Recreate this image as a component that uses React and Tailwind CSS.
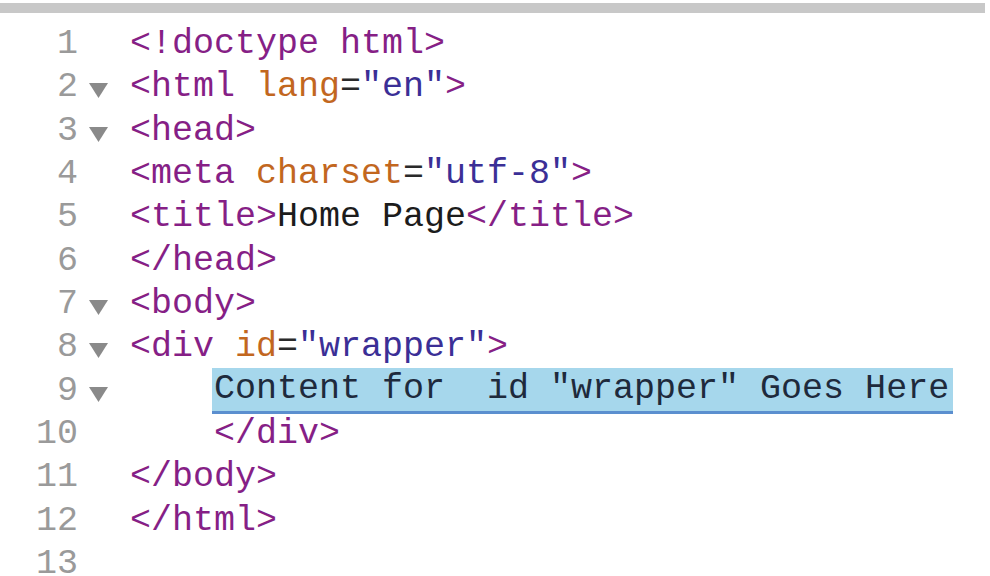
import React from 'react';

const tag = 'text-[#861f86]';
const attr = 'text-[#c2671f]';
const str = 'text-[#3b2f96]';
const eq = 'text-[#2a2a2a]';

const lines = [
  { fold: false, code: <><span className={tag}>&lt;!doctype html&gt;</span></> },
  {
    fold: true,
    code: (
      <>
        <span className={tag}>&lt;html </span>
        <span className={attr}>lang</span>
        <span className={eq}>=</span>
        <span className={str}>"en"</span>
        <span className={tag}>&gt;</span>
      </>
    ),
  },
  { fold: true, code: <span className={tag}>&lt;head&gt;</span> },
  {
    fold: false,
    code: (
      <>
        <span className={tag}>&lt;meta </span>
        <span className={attr}>charset</span>
        <span className={eq}>=</span>
        <span className={str}>"utf-8"</span>
        <span className={tag}>&gt;</span>
      </>
    ),
  },
  {
    fold: false,
    code: (
      <>
        <span className={tag}>&lt;title&gt;</span>
        <span className="text-[#1c1c1c]">Home Page</span>
        <span className={tag}>&lt;/title&gt;</span>
      </>
    ),
  },
  { fold: false, code: <span className={tag}>&lt;/head&gt;</span> },
  { fold: true, code: <span className={tag}>&lt;body&gt;</span> },
  {
    fold: true,
    code: (
      <>
        <span className={tag}>&lt;div </span>
        <span className={attr}>id</span>
        <span className={eq}>=</span>
        <span className={str}>"wrapper"</span>
        <span className={tag}>&gt;</span>
      </>
    ),
  },
  {
    fold: true,
    code: (
      <>
        <span>{'    '}</span>
        <span className="-ml-[2px] inline-block bg-[#a6d7ec] border-b-[3px] border-[#5b8fcf] pl-[2px] pr-[4px] text-[#1e2a3c]">
          {'Content for  id "wrapper" Goes Here'}
        </span>
      </>
    ),
  },
  {
    fold: false,
    code: (
      <>
        <span>{'    '}</span>
        <span className={tag}>&lt;/div&gt;</span>
      </>
    ),
  },
  { fold: false, code: <span className={tag}>&lt;/body&gt;</span> },
  { fold: false, code: <span className={tag}>&lt;/html&gt;</span> },
  { fold: false, code: null },
];

function Fold() {
  return (
    <svg width="19" height="17" viewBox="0 0 19 17" className="mt-[6px]">
      <polygon points="0,1 19,1 9.5,16" fill="#8a8a8a" />
    </svg>
  );
}

export default function App() {
  return (
    <div className="w-[990px] h-[576px] bg-white overflow-hidden">
      <div className="mt-[3px] mr-[5px] h-[10px] bg-[#c8c8c8]" />
      <div
        className="pt-[10px] text-[35px] whitespace-pre"
        style={{ fontFamily: '"Liberation Mono", "DejaVu Sans Mono", monospace' }}
      >
        {lines.map((l, i) => (
          <div key={i} className="flex items-center h-[43.33px] leading-[43.33px]">
            <div className="w-[78px] text-right text-[#9a9a9a]">{i + 1}</div>
            <div className="w-[52px] flex items-center pl-[11px]">{l.fold && <Fold />}</div>
            <div>{l.code}</div>
          </div>
        ))}
      </div>
    </div>
  );
}
